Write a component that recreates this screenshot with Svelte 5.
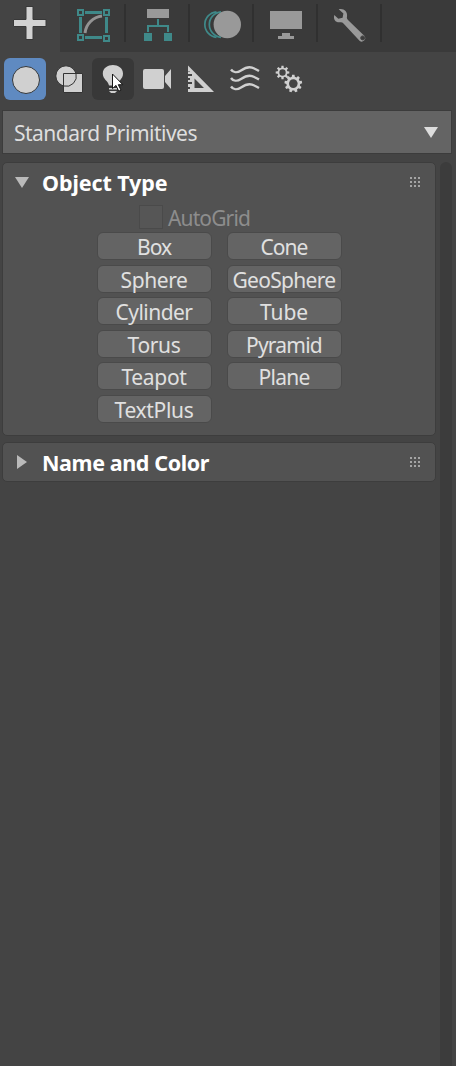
<script>
  const tabs = ['create', 'modify', 'hierarchy', 'motion', 'display', 'utilities'];
  const categories = ['geometry', 'shapes', 'lights', 'cameras', 'helpers', 'warps', 'systems'];
  const primitives = [
    ['Box', 34], ['Cone', 47], ['Sphere', 67], ['GeoSphere', 103], ['Cylinder', 77], ['Tube', 48],
    ['Torus', 53], ['Pyramid', 76], ['Teapot', 65], ['Plane', 51], ['TextPlus', 79]
  ];

  // Outline of a cog wheel with square teeth
  function cog(cx, cy, outer, inner, teeth) {
    const pts = [];
    for (let i = 0; i < teeth; i++) {
      const a = (i / teeth) * Math.PI * 2 - Math.PI / 2;
      const w = Math.PI / teeth;
      for (const [r, o] of [[inner, -0.62], [outer, -0.4], [outer, 0.4], [inner, 0.62]]) {
        pts.push(`${(cx + r * Math.cos(a + o * w)).toFixed(2)},${(cy + r * Math.sin(a + o * w)).toFixed(2)}`);
      }
    }
    return pts.join(' ');
  }

  // Sets the condensed width of each label
  function fit(node, width) {
    const natural = node.getBoundingClientRect().width;
    node.style.letterSpacing = `${(width - natural) / node.textContent.length}px`;
  }
</script>

{#snippet grip()}
  <svg class="grip" width="10" height="10" viewBox="0 0 10 10" fill="#a4a4a4">
    {#each [0, 4, 8] as y}{#each [0, 4, 8] as x}<rect {x} {y} width="2" height="2" />{/each}{/each}
  </svg>
{/snippet}

<main>
  <nav>
    {#each tabs as tab}
      <div class="tab {tab}">
        <svg width="64" height="52" viewBox="0 0 64 52">
          {#if tab === 'create'}
            <path d="M26 6.5h7v13h13v7H33v13h-7v-13H13.5v-7H26z" fill="#d2d2d2" stroke="#383838" />
          {:else if tab === 'modify'}
            <g fill="none" stroke="#3f8989">
              <path d="M25 12.5h17M25 37.5h17M20.5 17v16M46.5 17v16" stroke-width="3" />
              <path d="M25 33C26 24 33 17 42 16" stroke="#939393" stroke-width="3" />
              <path d="M18 10h5v5h-5zM44 10h5v5h-5zM18 35h5v5h-5zM44 36h5v5h-5z" stroke-width="2" />
            </g>
          {:else if tab === 'hierarchy'}
            <path d="M23 9h22v9H23z" fill="#999" />
            <path d="M34 19v7M24 32v-6h20v6" fill="none" stroke="#3f8989" stroke-width="2" />
            <path d="M20 33h8v8h-8zM40 33h8v8h-8z" fill="#3f8989" />
          {:else if tab === 'motion'}
            <g fill="none" stroke="#3f8989" stroke-width="1.7">
              <path d="M28.5 11.8a12.8 12.8 0 0 0 0 25.5" />
              <path d="M33 11.8a12.8 12.8 0 0 0 0 25.5" />
              <path d="M37 12a12.8 12.8 0 0 0 0 25" />
            </g>
            <circle cx="39.3" cy="24.5" r="13.7" fill="#999" />
          {:else if tab === 'display'}
            <path d="M18 11h32v18H18zM30 33h8v3h4v3H26v-3h4z" fill="#999" />
          {:else}
            <path d="M22.7 9.3C27 7.8 32 11 31 16.5c-.2 1.2-.3 2.2 1 3.5l16.5 16a3.5 3.5 0 0 1-5 4.8L27.5 23.5c-1-1.1-2-1.5-3.5-1.2-4.4.5-6.9-3-5.7-7.4l4 3.8 4.3-1 .8-4.1z" fill="#999" />
            <circle cx="46.7" cy="37.9" r="2" fill="#3b3b3b" stroke="#454545" />
          {/if}
        </svg>
      </div>
    {/each}
    <div class="tab"></div>
  </nav>

  <div class="tools">
    {#each categories as category}
      <div class="tool {category}">
        <svg width="42" height="42" viewBox="0 0 42 42" fill="#d0d0d0">
          {#if category === 'geometry'}
            <circle cx="22" cy="22" r="13.5" stroke="#34383c" />
          {:else if category === 'shapes'}
            <g stroke="#333">
              <circle cx="18" cy="18" r="10.2" />
              <path d="M15.5 15.5h19v19h-19z" />
              <path d="M15.5 28a10.2 10.2 0 0 0 12.5-12.5" fill="none" />
            </g>
          {:else if category === 'lights'}
            <path d="M10.8 15.5C11 4 30.8 4 31 15.5c.1 6-5.2 7-6 12h-8c-1-5-6.2-6-6.2-12zM17 30h8v1.5h-8zM17 33h8l-2 2h-4z" />
            <path d="M20.5 16v14.6l3.5-3.2 2.7 5.8 2.3-1.1-2.7-5.4h4.5z" fill="#fff" stroke="#151515" />
          {:else if category === 'cameras'}
            <path d="M9 11h17a2 2 0 0 1 2 2v16a2 2 0 0 1-2 2H9a2 2 0 0 1-2-2V13a2 2 0 0 1 2-2zM29 18l6-7v20l-6-7z" />
          {:else if category === 'helpers'}
            <path fill-rule="evenodd" d="M8 7.5 34 34H8v-3h2v-2H8v-3h4v-2H8v-2h2v-2H8v-2h4v-2H8v-2.5h2V13H8zM14.5 20.5V30H24z" />
          {:else if category === 'warps'}
            <g fill="none" stroke="#d0d0d0" stroke-width="2.4">
              {#each [12.5, 21, 29.5] as y}
                <path d="M7 {y - 1}c2 3 6 3.6 10 1s8-3.8 11-2.8 4 1.5 7 3.3" />
              {/each}
            </g>
          {:else}
            <polygon points={cog(14.5, 14.5, 6.9, 5, 8)} />
            <circle cx="14.5" cy="14.5" r="3.2" fill="#444" />
            <polygon points={cog(25.3, 25.6, 8.9, 6.9, 9)} />
            <circle cx="25.3" cy="25.6" r="4.3" fill="#444" />
          {/if}
        </svg>
      </div>
    {/each}
  </div>

  <div class="combo">
    <span use:fit={183}>Standard Primitives</span>
    <svg width="14" height="11" viewBox="0 0 14 11"><path d="M0 0h14L7 11z" fill="#ddd" /></svg>
  </div>

  <div class="body">
    <div class="rollouts">
      <section class="open">
        <header>
          <svg class="arrow" width="14" height="11" viewBox="0 0 14 11"><path d="M0 0h14L7 11z" fill="#bababa" /></svg>
          <h2><span use:fit={125.5}>Object Type</span></h2>
          {@render grip()}
        </header>
        <div class="auto"><i></i><span use:fit={82}>AutoGrid</span></div>
        <div class="grid">
          {#each primitives as [name, width]}
            <button><span use:fit={width}>{name}</span></button>
          {/each}
        </div>
      </section>
      <section>
        <header>
          <svg class="arrow" width="14" height="14" viewBox="0 0 14 14"><path d="M2 0l10 7-10 7z" fill="#bababa" /></svg>
          <h2><span use:fit={167}>Name and Color</span></h2>
          {@render grip()}
        </header>
      </section>
    </div>
    <div class="scroll"></div>
  </div>
</main>

<style>
  :global(body) { background: #444; }
  main {
    width: 456px; height: 1066px; overflow: hidden; display: flex; flex-direction: column;
    background: #444; color: #dedede; font: 21px/26px "Noto Sans", sans-serif;
  }
  svg { display: block; flex: none; }
  span { white-space: nowrap; }
  nav { display: flex; flex: none; height: 52px; background: #3a3a3a; }
  .tab { width: 64px; flex: none; background: linear-gradient(#303030, #303030) left top 4px / 2px 38px no-repeat; }
  .tab.create { width: 60px; background: #444; }
  .tab.modify { background: none; }
  .tools { display: flex; gap: 2px; padding: 6px 4px 10px; }
  .tool { width: 42px; height: 42px; border-radius: 6px; }
  .geometry { background: #5f8ac1; }
  .lights { background: #383838; }
  .combo {
    height: 44px; flex: none; box-sizing: border-box; margin: 0 4px 0 2px; padding: 0 13px 0 11px;
    display: flex; align-items: center; justify-content: space-between;
    background: #646464; border: 1px solid #3c3c3c;
  }
  .combo span { padding-top: 1px; }
  .body { display: flex; flex: 1; justify-content: space-between; padding: 8px 4px 0 2px; }
  .rollouts { width: 434px; display: flex; flex-direction: column; gap: 6px; }
  section {
    box-sizing: border-box; height: 40px; border: 1px solid #3d3d3d; border-radius: 5px; background: #525252;
  }
  .open { height: 274px; }
  header { height: 38px; display: flex; align-items: center; padding: 0 15px 0 12px; }
  h2 { flex: 1; margin: 0 0 0 13px; padding-top: 1px; font-size: 21.5px; font-weight: 700; color: #fff; }
  .auto { display: flex; align-items: center; height: 30px; padding: 1px 0 0 136px; gap: 5px; color: #8d8d8d; }
  .auto i { width: 24px; height: 24px; box-sizing: border-box; border: 1px solid #4a4a4a; background: #565656; }
  .auto span { padding-top: 2px; }
  .grid { display: grid; grid-template-columns: 115px 115px; grid-auto-rows: 28px; gap: 4.6px 15px; margin-left: 94px; }
  button {
    display: flex; align-items: center; justify-content: center; padding: 2px 1px 0 0;
    border: 1px solid #4a4a4a; border-radius: 6px; background: #646464; color: #e0e0e0; font: inherit; line-height: 24px;
  }
  .scroll { width: 12px; border-radius: 6px 6px 0 0; background: #3c3c3c; }
</style>
